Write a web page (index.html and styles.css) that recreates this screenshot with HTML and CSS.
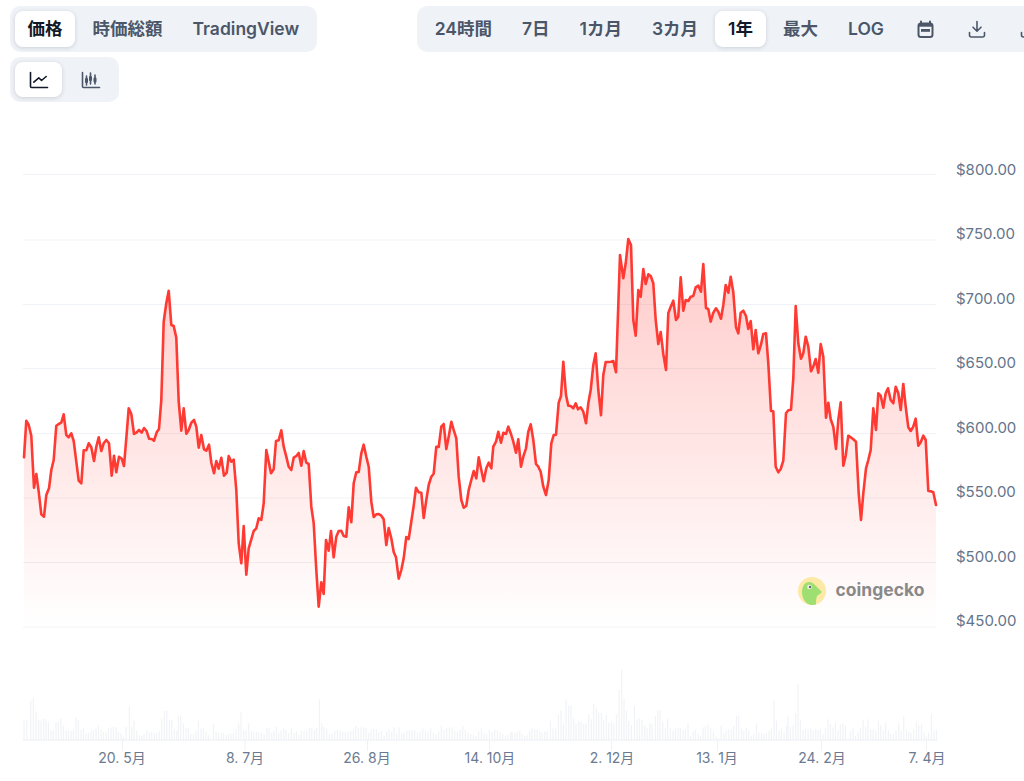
FILE: index.html
```html
<!DOCTYPE html>
<html lang="ja">
<head>
<meta charset="utf-8">
<title>価格チャート</title>
<link rel="stylesheet" href="styles.css">
</head>
<body>
<div class="page">
  <div class="toolbar-row">
    <div class="controls-left">
      <div class="segment">
        <button class="tab active">価格</button>
        <button class="tab">時価総額</button>
        <button class="tab">TradingView</button>
      </div>
      <div class="segment chart-type">
        <button class="tab icon-tab active">
          <svg class="icon" viewBox="0 0 20 20"><path d="M1.500 2.500v14a1 1 0 0 0 1 1h16"/><path d="M4.800 12.200l5-4.400 2.700 2.700 4.700-4"/></svg>
        </button>
        <button class="tab icon-tab">
          <svg class="icon" viewBox="0 0 20 20"><path d="M1.500 2.500v14a1 1 0 0 0 1 1h16"/><path d="M5.500 6v9M9.500 3v11M14 5v9"/><rect class="solid" x="4" y="8" width="3" height="5" rx="1"/><rect class="solid" x="8" y="6" width="3" height="5" rx="1"/><rect class="solid" x="12.500" y="7.500" width="3" height="5" rx="1"/></svg>
        </button>
      </div>
    </div>
    <div class="segment ranges">
      <button class="tab">24時間</button>
      <button class="tab">7日</button>
      <button class="tab">1カ月</button>
      <button class="tab">3カ月</button>
      <button class="tab active">1年</button>
      <button class="tab">最大</button>
      <button class="tab">LOG</button>
      <button class="tab icon-tab">
        <svg class="icon cal" viewBox="0 0 20 20"><path d="M6 2.500v2M15 2.500v2"/><rect x="3.500" y="4.500" width="14" height="13.500" rx="2.500"/><rect class="solid" x="3.500" y="4.500" width="14" height="3.200"/><rect class="solid" x="6" y="10" width="9" height="2.800"/></svg>
      </button>
      <button class="tab icon-tab">
        <svg class="icon" viewBox="0 0 20 20"><path d="M10 2.500v9.500M6 8.200l4 4 4-4"/><path d="M2.500 13.500v2.500a2 2 0 0 0 2 2h11a2 2 0 0 0 2-2v-2.500"/></svg>
      </button>
      <button class="tab icon-tab">
        <svg class="icon" viewBox="0 0 20 20"><path d="M10 2.500v9.500M6 8.200l4 4 4-4"/><path d="M2.500 13.500v2.500a2 2 0 0 0 2 2h11a2 2 0 0 0 2-2v-2.500"/></svg>
      </button>
    </div>
  </div>
  <svg class="chart" id="chart" viewBox="0 0 1024 781" width="1024" height="781">
    <defs>
      <linearGradient id="areaFill" gradientUnits="userSpaceOnUse" x1="0" y1="239" x2="0" y2="627">
        <stop offset="0" stop-color="#ff3a33" stop-opacity="0.27"/>
        <stop offset="1" stop-color="#ff3a33" stop-opacity="0"/>
      </linearGradient>
      <clipPath id="logoClip"><circle cx="812" cy="591" r="14"/></clipPath>
    </defs>
    <g class="grid">
      <path d="M23 174.500H936M23 240H936M23 304.500H936M23 368.500H936M23 433.500H936M23 498H936M23 562.500H936M23 627H936"/>
    </g>
    <g id="volume" class="volume"></g>
    <path id="area" class="area" fill="url(#areaFill)"/>
    <path id="line" class="line"/>
    <g class="ticks">
      <path d="M122.500 740v11M245 740v11M367.500 740v11M489.500 740v11M611.500 740v11M717.500 740v11M821.500 740v11M926.500 740v11"/>
    </g>
    <g class="y-labels">
      <text x="956" y="174.500">$800.00</text>
      <text x="956" y="239">$750.00</text>
      <text x="956" y="303.500">$700.00</text>
      <text x="956" y="367.500">$650.00</text>
      <text x="956" y="432.500">$600.00</text>
      <text x="956" y="496.500">$550.00</text>
      <text x="956" y="561.500">$500.00</text>
      <text x="956" y="625.500">$450.00</text>
    </g>
    <g class="x-labels">
      <text x="122" y="762.500">20. 5月</text>
      <text x="245" y="762.500">8. 7月</text>
      <text x="367" y="762.500">26. 8月</text>
      <text x="490" y="762.500">14. 10月</text>
      <text x="612" y="762.500">2. 12月</text>
      <text x="717" y="762.500">13. 1月</text>
      <text x="822" y="762.500">24. 2月</text>
      <text x="927" y="762.500">7. 4月</text>
    </g>
    <g class="brand">
      <circle cx="812" cy="591" r="14" fill="#fce9a6"/>
      <path clip-path="url(#logoClip)" d="M802 592c0-6 3-10 7-10 3 0 5 2 7 4l6 6c-2 2-4 3-5 4-1 3-1 6-1 9h-6c-5-2-8-7-8-13z" fill="#9fdf72"/>
      <circle cx="809.500" cy="587" r="2.300" fill="#f2f2ee"/>
      <circle cx="810" cy="587" r="1.200" fill="#5d6a58"/>
      <text x="835.500" y="596">coingecko</text>
    </g>
  </svg>
</div>
<script src="chart.js"></script>
</body>
</html>
```

FILE: styles.css
```css
* { box-sizing: border-box; }
html, body { margin: 0; padding: 0; background: #fff; }
.page {
  position: relative;
  width: 1024px;
  height: 781px;
  overflow: hidden;
  font-family: Inter, "Noto Sans CJK JP", sans-serif;
}
.toolbar-row {
  position: relative;
  z-index: 1;
  display: flex;
  align-items: flex-start;
  padding: 6px 0 0 10px;
  width: 1100px;
  gap: 100px;
}
.controls-left {
  display: flex;
  flex-direction: column;
  align-items: flex-start;
  gap: 5px;
  flex: none;
}
.segment {
  display: flex;
  gap: 5px;
  padding: 5px;
  background: #eff3f8;
  border-radius: 10px;
  flex: none;
}
.ranges { gap: 4px; }
.tab {
  border: 0;
  background: transparent;
  height: 36px;
  padding: 0 12.500px;
  border-radius: 8px;
  font: 600 17.500px/36px Inter, "Noto Sans CJK JP", sans-serif;
  color: #4b5768;
  white-space: nowrap;
  display: flex;
  align-items: center;
  justify-content: center;
}
.tab.active {
  background: #fff;
  color: #111827;
  box-shadow: 0 1px 4px rgba(16, 24, 40, 0.16);
}
.icon-tab { width: 47px; padding: 0; height: 35px; }
.icon { width: 20px; height: 20px; fill: none; stroke: currentColor; stroke-width: 1.600; stroke-linecap: round; stroke-linejoin: round; }
.icon .solid { fill: currentColor; stroke: none; }
.icon.cal { stroke-width: 2; }
.ranges .tab { padding: 0 13px; }
.ranges .icon-tab { width: 48px; padding: 0; height: 36px; }
.chart { position: absolute; left: 0; top: 0; display: block; }
.grid path { fill: none; stroke: #eff2f6; stroke-width: 1; }
.ticks path { fill: none; stroke: #f0f2f6; stroke-width: 1; }
.volume rect { fill: #f0f2f6; }
.line { fill: none; stroke: #ff3a33; stroke-width: 2.600; stroke-linejoin: round; stroke-linecap: round; }
.y-labels text { font: 400 15px Inter, sans-serif; fill: #64748b; }
.x-labels text { font: 400 14px Inter, "Noto Sans CJK JP", sans-serif; fill: #6b7a90; text-anchor: middle; }
.brand text { font: 700 17.500px Inter, sans-serif; fill: #898989; }
```

FILE: chart.js
```js
// Price samples traced per chart section: [x origin, y origin, x, y, x, y, ...] at 3 units per pixel.
var sections = [
  [0, 270, [72,562,79,452,86,465,94,497,102,653,109,612,116,665,124,733,132,740,139,675,147,655,154,600,161,570,169,467,176,462,184,458,191,433,199,495,206,502,214,490,221,513,229,575,236,632,244,640,251,541,259,541,266,520,274,532,282,573,289,530,296,502,304,543,311,520,319,510,327,520,335,617,342,557,349,607,357,560,365,566,372,588,380,490,386,415,394,432,402,492,410,487,417,480,425,488,432,474,440,484,447,506,455,507,462,512,470,487,477,477,484,390,491,155,499,100,506,62,514,165,521,168,529,203,536,395,544,482,551,415,559,491,566,480,574,458,582,450,589,470,596,533,604,495,612,538,619,542,627,524,634,578,642,610,649,573,656,596,664,563,672,617,680,608,686,558,694,575,701,569,709,660,716,820,724,880,731,768,739,914,746,835,754,808,761,783,769,775,776,745,784,750,791,700,799,540,806,575,813,610,821,598,828,513,836,511,844,481,851,530,859,560,866,590,874,600,881,563,889,558,896,549,904,587,911,543,919,578,926,582,934,710,941,760,949,900]],
  [310, 340, [26,800,34,727,41,762,48,600,56,632,63,573,71,652,79,590,86,573,94,572,101,588,109,590,116,502,124,547,131,430,139,397,146,396,154,340,161,314,169,350,176,380,184,485,191,531,199,523,206,522,214,527,221,538,229,615,236,564,244,595,251,636,258,652,266,716,274,690,281,655,289,591,296,597,304,545,311,497,318,443,326,457,334,458,341,534,349,480,356,435,364,410,371,401,379,320,386,321,394,260,401,252,409,327,416,290,424,245,431,270,439,295,446,410,454,480,461,503,469,497,476,450,484,420,491,393,499,415,506,352,514,390,521,424,529,385,536,368,544,385,550,320,558,305,565,275,573,308,580,278,588,282,595,260,603,282,610,305,618,338,625,298,633,380,640,350,648,325,655,275,662,253,670,300,678,372,685,380,692,395,700,440,708,465,716,420,724,310,731,285,738,284,746,188,753,168,760,65,768,165,775,197,782,198,790,205,797,190,804,208,812,202,820,215,828,250,835,190,842,150,850,75,857,40,865,150,873,226,880,105,887,66,895,66,903,65,910,63,918,97]],
  [620, 230, [0,75,10,145,17,100,25,27,33,45,40,270,47,317,55,180,62,200,70,117,77,162,85,133,92,138,100,160,107,270,115,342,122,306,130,372,138,420,145,250,152,230,160,212,168,270,175,260,182,142,190,242,197,210,205,213,212,200,220,198,227,172,235,167,243,185,250,102,258,234,265,237,272,275,280,248,288,235,295,245,303,266,310,225,317,165,325,188,332,140,340,187,348,292,355,310,362,248,370,242,378,258,385,297,392,273,400,358,407,300,415,370,422,347,430,312,438,310,445,400,453,543,460,544,467,710,475,727,482,717,490,692,498,550,505,541,513,539,520,445,527,228,535,340,543,386,550,370,557,320,565,350,573,424,580,410,587,387,595,428,602,342,610,380,618,563,625,518,632,568,640,590,648,657,655,570,662,517,670,707,677,677,685,617,692,622,700,628,708,635,716,790,723,870,730,790,738,715,745,690,752,660,760,535,768,600,775,490,782,497,790,533,797,490,804,475,812,510,820,520,827,470,835,490,842,540,850,462,857,530,865,592,872,603,880,590,887,566,895,647,902,637,910,617,917,630,925,783,932,784,940,787,948,825]]
];
var pts = [];
sections.forEach(function (s) {
  for (var i = 0; i < s[2].length; i += 2) {
    pts.push((s[0] + s[2][i] / 3).toFixed(1) + ' ' + (s[1] + s[2][i + 1] / 3).toFixed(1));
  }
});
var d = 'M' + pts.join('L');
document.getElementById('line').setAttribute('d', d);
var first = pts[0].split(' ')[0];
var last = pts[pts.length - 1].split(' ')[0];
document.getElementById('area').setAttribute('d', d + 'L' + last + ' 627L' + first + ' 627Z');

// Volume bars: [x, top] pairs in the same 3-units-per-pixel space, baseline 240 (y 740).
var vol = [
  [0, [72,182,80,180,92,122,100,112,108,155,116,178,123,182,131,176,138,178,145,186,153,212,160,210,168,187,175,185,183,176,190,196,198,210,205,212,213,212,220,208,228,172,235,180,243,210,250,205,258,220,265,218,273,212,280,210,288,205,295,195,303,208,310,215,318,218,325,205,333,202,340,201,348,201,355,216,363,220,370,232,378,200,388,140,395,200,402,182,410,212,418,225,425,228,432,222,440,210,448,216,455,216,463,220,470,218,478,215,485,175,493,152,500,152,508,178,515,180,523,208,530,212,535,167,542,167,550,190,558,203,565,205,572,222,580,222,588,212,595,182,603,205,610,205,618,215,625,225,632,235,640,192,648,215,655,218,663,218,670,218,678,225,685,220,693,220,700,218,708,208,716,190,723,155,731,212,738,210,746,190,754,212,761,215,769,215,776,218,784,218,792,222,800,204,807,202,815,218,822,212,829,201,836,218,843,212,851,205,858,210,866,218,874,205,882,218,889,214,897,225,904,212,912,214,920,212,928,204,935,202,943,210,950,204,958,118,965,190,972,200,980,206,988,225,996,220,1004,212,1012,208,1020,212,1028,215,1036,216,1044,215,1052,212,1060,210,1067,198,1075,203,1083,202,1091,202,1098,205,1106,218,1113,210,1121,207,1129,207,1136,218,1144,212,1152,228,1160,215,1167,208,1175,215,1182,202,1190,220,1197,201,1205,220,1212,218,1220,212,1228,210,1236,210,1244,210,1252,218,1260,215,1268,205,1276,212,1284,215,1292,205,1300,218,1308,222,1316,215,1324,197,1332,210,1340,205,1348,202,1356,202,1364,212,1372,215,1380,210,1388,198,1396,210,1404,218,1412,222,1420,225,1428,228,1436,215,1444,205,1452,218,1460,222,1468,210,1476,215,1484,208,1492,210,1500,215,1508,220,1516,228,1524,225,1532,218]],
  [512, [0,215,8,218,15,215,23,212,30,222,38,228,45,225,53,212,60,205,68,208,75,210,83,215,90,218,98,215,105,212,115,182,123,205,131,205,139,165,147,152,154,190,162,118,170,137,177,137,185,175,192,190,200,183,207,185,215,192,222,190,230,163,238,178,245,130,253,145,260,158,268,158,275,180,283,165,290,188,298,185,305,190,313,163,321,88,329,28,336,115,343,152,350,182,358,195,367,138,375,178,382,175,390,178,398,195,405,205,413,190,420,190,430,168,437,152,444,150,452,185,460,205,467,175,475,205,483,212,490,205,498,205,505,205,513,212,520,208,528,190,535,228,543,215,550,210,558,222,565,228,573,202,580,198,588,194,596,205,604,215,612,230,620,235,627,197,635,220,642,212,650,208,658,208,665,197,673,167,680,167,688,205,695,212,703,202,710,212,718,228,725,222,733,190,740,218,748,218,755,222,763,218,771,212,778,205,786,122,793,182,801,212,808,208,816,215,824,197,828,170,835,202,843,194,851,160,858,72,865,178,873,210,880,207,888,206,896,205,903,212,911,208,918,210,925,208,933,222,940,205,948,178,955,192,963,202,970,190,978,210,985,193,993,190,1000,197,1008,235,1015,212,1023,205,1030,228,1038,218,1045,205,1053,180,1061,200,1068,178,1076,208,1083,208,1091,212,1099,182,1106,195,1114,210,1121,187,1129,212,1136,222,1144,222,1152,212,1160,190,1167,212,1175,170,1183,208,1190,215,1197,218,1205,208,1213,185,1220,195,1228,193,1236,218,1243,230,1250,218,1258,163,1266,212,1273,208]]
];
var NS = 'http://www.w3.org/2000/svg';
var g = document.getElementById('volume');
vol.forEach(function (s) {
  for (var i = 0; i < s[1].length; i += 2) {
    var r = document.createElementNS(NS, 'rect');
    var top = 660 + s[1][i + 1] / 3;
    r.setAttribute('x', (s[0] + s[1][i] / 3 - 0.5).toFixed(1));
    r.setAttribute('y', top.toFixed(1));
    r.setAttribute('width', '1.1');
    r.setAttribute('height', (741 - top).toFixed(1));
    g.appendChild(r);
  }
});
var base = document.createElementNS(NS, 'rect');
base.setAttribute('x', '23');
base.setAttribute('y', '739.5');
base.setAttribute('width', '913');
base.setAttribute('height', '1');
g.appendChild(base);
```
